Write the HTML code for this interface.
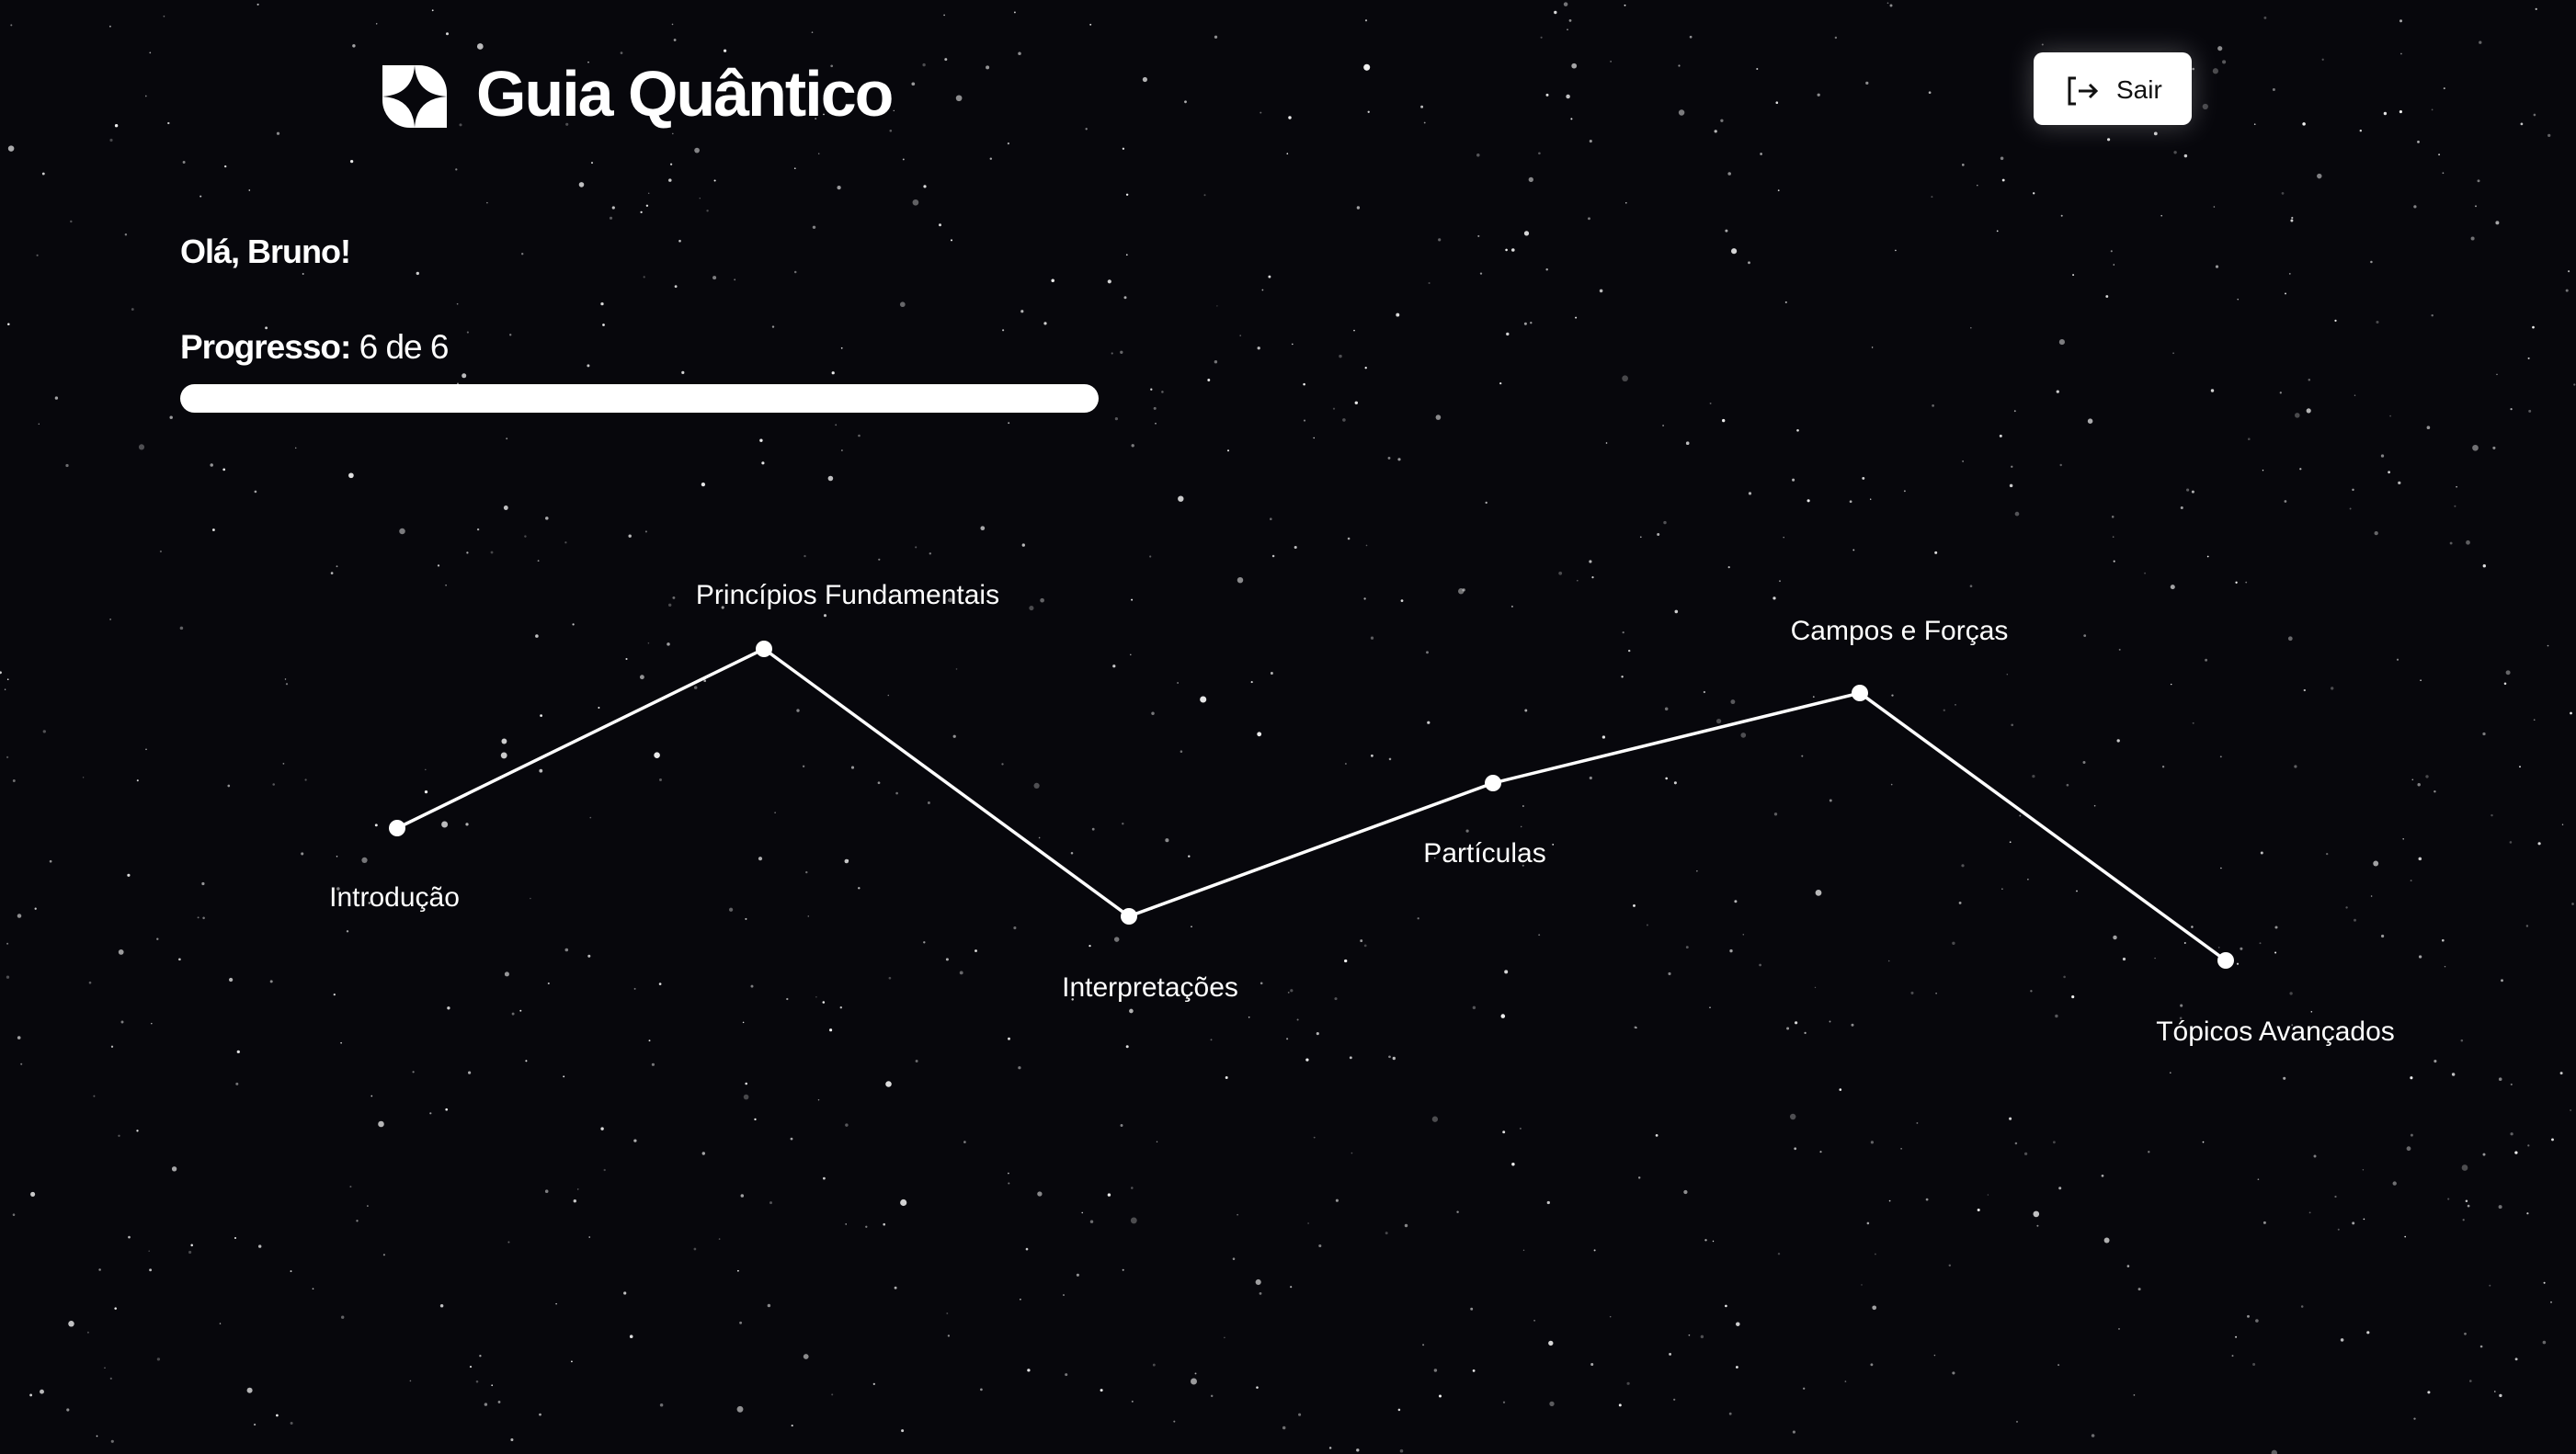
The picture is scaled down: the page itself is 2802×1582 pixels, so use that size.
<!DOCTYPE html>
<html><head><meta charset="utf-8">
<style>
html,body{margin:0;padding:0;}
body{width:2802px;height:1582px;background:#07070c;position:relative;overflow:hidden;font-family:"Liberation Sans",sans-serif;color:#fff;}
#stars{position:absolute;left:0;top:0;}
.abs{position:absolute;white-space:nowrap;}
.title{left:518px;top:62px;font-size:70px;font-weight:bold;letter-spacing:-2px;}
.btn{left:2212px;top:57px;width:172px;height:79px;background:#fff;border-radius:10px;box-shadow:0 0 30px rgba(255,255,255,0.25);color:#111;font-size:28px;}
.hello{left:196px;top:253px;font-size:36px;font-weight:bold;letter-spacing:-1px;}
.prog{left:196px;top:357px;font-size:37px;letter-spacing:-1px;}
.bar{left:196px;top:418px;width:999px;height:31px;background:#fff;border-radius:16px;}
.lbl{font-size:30px;transform:translate(-50%,-50%);}
</style></head><body>
<svg id="stars" width="2802" height="1582"></svg>
<svg class="abs" style="left:416px;top:71px" width="70" height="68" viewBox="0 0 70 68">
<path d="M0 0 H40 A30 30 0 0 1 70 30 V68 H30 A30 30 0 0 1 0 38 Z" fill="#fff"/>
<path d="M35 0 Q33 32 0 34 Q33 36 35 68 Q37 36 70 34 Q37 32 35 0 Z" fill="#07070c"/>
</svg>
<div class="abs title">Guia Quântico</div>
<div class="abs btn">
<svg style="position:absolute;left:36px;top:26px" width="36" height="32" viewBox="0 0 36 32" fill="none" stroke="#111" stroke-width="3"><path d="M10 2 H3 V30 H10"/><path d="M13 16 H32 M25 9 L32 16 L25 23"/></svg>
<span style="position:absolute;left:90px;top:25px;">Sair</span>
</div>
<div class="abs hello">Olá, Bruno!</div>
<div class="abs prog"><b>Progresso:</b> 6 de 6</div>
<div class="abs bar"></div>
<svg class="abs" style="left:0;top:0" width="2802" height="1582">
<polyline points="432,901 831,706 1228,997 1624,852 2023,754 2421,1045" fill="none" stroke="#fff" stroke-width="3.5"/>
<g fill="#fff"><circle cx="432" cy="901" r="9"/><circle cx="831" cy="706" r="9"/><circle cx="1228" cy="997" r="9"/><circle cx="1624" cy="852" r="9"/><circle cx="2023" cy="754" r="9"/><circle cx="2421" cy="1045" r="9"/></g>
</svg>
<div class="abs lbl" style="left:429px;top:977px">Introdução</div>
<div class="abs lbl" style="left:922px;top:648px">Princípios Fundamentais</div>
<div class="abs lbl" style="left:1251px;top:1075px">Interpretações</div>
<div class="abs lbl" style="left:1615px;top:929px">Partículas</div>
<div class="abs lbl" style="left:2066px;top:687px">Campos e Forças</div>
<div class="abs lbl" style="left:2475px;top:1123px">Tópicos Avançados</div>
<script>
var s=12345;function r(){s=(s*1103515245+12345)%2147483648;return s/2147483648;}
var svg=document.getElementById('stars'),h='';
for(var i=0;i<1000;i++){var x=r()*2802,y=r()*1582,z=r();var rad=z<0.88?0.7+r()*1.1:1.8+r()*1.8;var o=0.25+r()*0.7;h+='<circle cx="'+x.toFixed(1)+'" cy="'+y.toFixed(1)+'" r="'+rad.toFixed(2)+'" fill="#fff" opacity="'+o.toFixed(2)+'"/>';}
svg.innerHTML=h;
</script>
</body></html>
